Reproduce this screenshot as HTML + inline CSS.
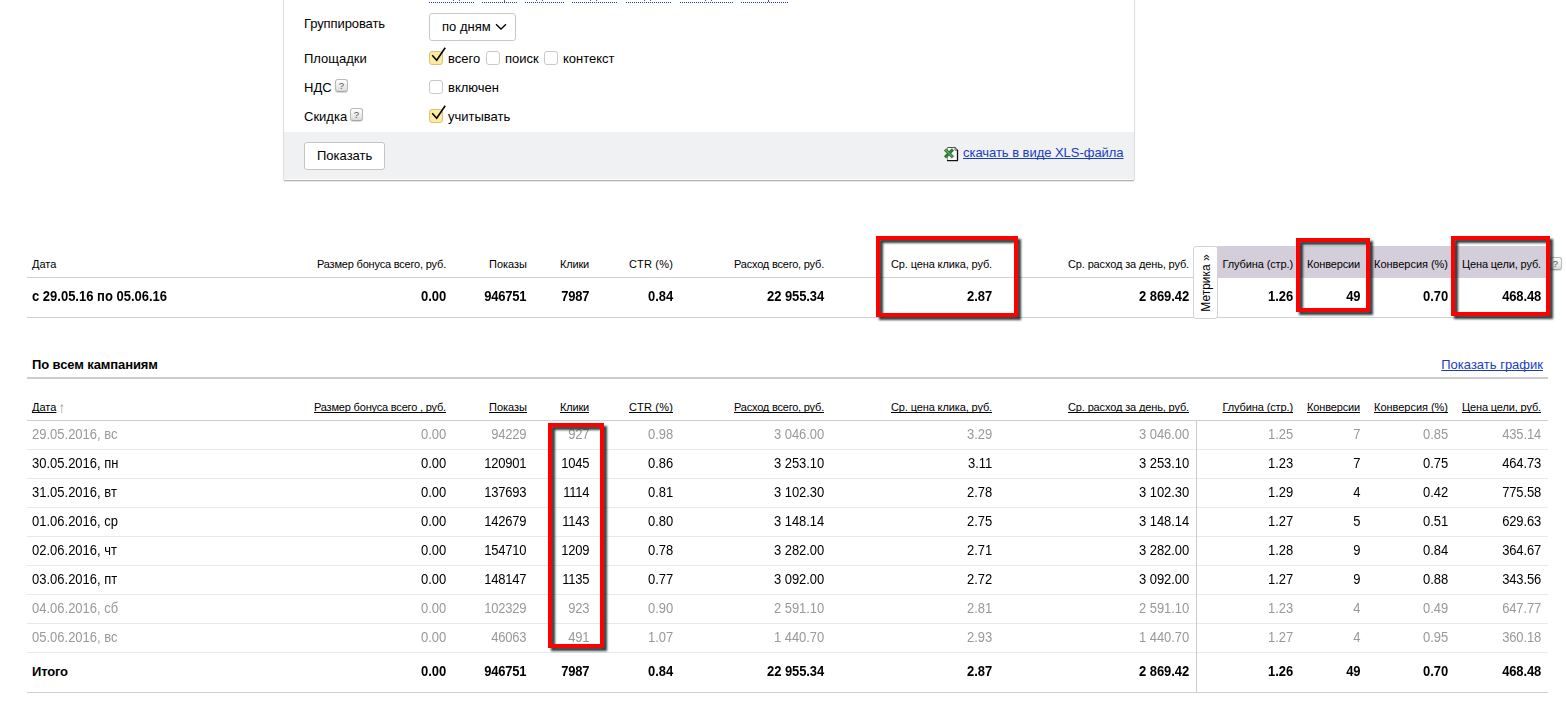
<!DOCTYPE html>
<html lang="ru"><head><meta charset="utf-8"><title>Статистика</title>
<style>
html,body{margin:0;padding:0}
body{width:1566px;height:707px;position:relative;overflow:hidden;background:#fff;font-family:"Liberation Sans",Arial,sans-serif;font-size:13px;color:#000}
.abs{position:absolute}
.c{position:absolute;white-space:nowrap;line-height:16px;text-decoration-skip-ink:none}
.t{transform:scaleY(1.1);transform-origin:0 3.2px}
.n{}
.h{font-size:11px;line-height:13px}
.hu{font-size:11px;line-height:13px;text-decoration:underline}
.b{font-weight:bold}
.g{color:#999}
.lnk{color:#1a3dc1;text-decoration:underline}
.hl{position:absolute;height:1px;left:27px;width:1521px;background:#d2d2d2}
.rl{background:#e9e8ef}
.cb{position:absolute;width:12px;height:12px;border:1px solid #c9c9c9;border-radius:3px;background:#fff}
.cb.on{background:#ffeba0;border-color:#d9c379}
.q{position:absolute;width:11px;height:11px;border:1px solid #b9b9b9;border-bottom-color:#a5a5a5;border-radius:3px;background:linear-gradient(#fff,#dcdcdc);font-size:9.5px;line-height:12px;text-align:center;color:#555;box-shadow:0 1px 1px rgba(0,0,0,.15)}
.red{position:absolute;border:4px solid #fe0000;box-sizing:border-box;filter:drop-shadow(3px 3px 1.2px rgba(15,30,30,.85))}
.dot{position:absolute;top:2px;height:1px;background:repeating-linear-gradient(90deg,#1a3dc1 0 1px,transparent 1px 2px)}
.tk{position:absolute;top:0;width:1px;height:2px;background:#6a4fc8}
</style></head><body>

<div class="abs" style="left:283px;top:-20px;width:850px;height:199px;border:1px solid #dfdfdf;border-bottom-color:#b2b2b2;border-radius:0 0 3px 3px;background:#fff;box-shadow:0 1px 1px rgba(0,0,0,.1)"></div>
<div class="abs" style="left:284px;top:132px;width:850px;height:47px;background:#f0f1f3;border-radius:0 0 2px 2px"></div>

<div class="dot" style="left:429px;width:45px"></div>
<div class="tk" style="left:453px;height:1px"></div>
<div class="tk" style="left:459px;height:1px"></div>
<div class="dot" style="left:482px;width:35px"></div>
<div class="tk" style="left:504px;height:2px"></div>
<div class="dot" style="left:525px;width:39px"></div>
<div class="tk" style="left:536px;height:1px"></div>
<div class="tk" style="left:542px;height:1px"></div>
<div class="dot" style="left:572px;width:46px"></div>
<div class="tk" style="left:590px;height:1px"></div>
<div class="tk" style="left:596px;height:1px"></div>
<div class="dot" style="left:626px;width:46px"></div>
<div class="tk" style="left:644px;height:1px"></div>
<div class="tk" style="left:650px;height:1px"></div>
<div class="dot" style="left:680px;width:53px"></div>
<div class="tk" style="left:705px;height:1px"></div>
<div class="tk" style="left:711px;height:1px"></div>
<div class="dot" style="left:741px;width:47px"></div>
<div class="tk" style="left:768px;height:2px"></div>

<div class="c" style="left:304px;top:16px;letter-spacing:-0.1px">Группировать</div>
<div class="c" style="left:304px;top:51px">Площадки</div>
<div class="c" style="left:304px;top:80px">НДС</div>
<div class="c" style="left:304px;top:109px">Скидка</div>
<div class="abs" style="left:429px;top:13px;width:85px;height:26px;border:1px solid #c9c9c9;border-radius:3px;background:#fff"></div>
<div class="c" style="left:442px;top:19px">по дням</div>
<svg class="abs" style="left:495px;top:23px" width="12" height="8" viewBox="0 0 12 8"><path d="M1 1.2 L6 6 L11 1.2" fill="none" stroke="#000" stroke-width="1.3"/></svg>
<div class="cb on" style="left:429px;top:51px"></div>
<svg class="abs" style="left:430px;top:46px" width="18" height="18" viewBox="0 0 18 18"><path d="M2.2 9.3 L6.7 14.3 L15.2 1.8" fill="none" stroke="#000" stroke-width="1.6"/></svg>
<div class="c" style="left:448px;top:51px">всего</div>
<div class="cb" style="left:486px;top:51px"></div>
<div class="c" style="left:505px;top:51px">поиск</div>
<div class="cb" style="left:544px;top:51px"></div>
<div class="c" style="left:563px;top:51px">контекст</div>
<div class="cb" style="left:429px;top:80px"></div>
<div class="c" style="left:448px;top:80px">включен</div>
<div class="cb on" style="left:429px;top:109px"></div>
<svg class="abs" style="left:430px;top:104px" width="18" height="18" viewBox="0 0 18 18"><path d="M2.2 9.3 L6.7 14.3 L15.2 1.8" fill="none" stroke="#000" stroke-width="1.6"/></svg>
<div class="c" style="left:448px;top:109px">учитывать</div>
<div class="q" style="left:335px;top:79px">?</div>
<div class="q" style="left:350px;top:108px">?</div>
<div class="abs" style="left:304px;top:142px;width:79px;height:26px;border:1px solid #c4c4c4;border-radius:3px;background:#fff"></div>
<div class="c" style="left:317px;top:148px">Показать</div>
<div class="c lnk" style="left:963px;top:145px;letter-spacing:-0.04px">скачать в виде XLS-файла</div>
<svg class="abs" style="left:943px;top:146px" width="17" height="17" viewBox="0 0 17 17">
<path d="M4.5 1.5h8l2 2.2v11.8h-10z" fill="#fff"/>
<path d="M4.5 15V1.5" stroke="#9a9a9a" stroke-width="1" fill="none"/>
<path d="M4.5 1.5h8" stroke="#555" stroke-width="1" fill="none"/>
<path d="M12 1.5v2.7h2.6" stroke="#666" stroke-width="1" fill="none"/>
<path d="M12.2 1.6l2.4 2.5" stroke="#222" stroke-width="1" fill="none"/>
<path d="M14.5 4v10.6M4 14.6h11" stroke="#111" stroke-width="1.3" fill="none"/>
<path d="M2 3.3l8 8" stroke="#2f7d32" stroke-width="3.2" fill="none"/>
<path d="M10 3.3l-8 8" stroke="#2f7d32" stroke-width="3.2" fill="none"/>
<path d="M2.2 3.5l7.6 7.6" stroke="#8fc48f" stroke-width="0.9" fill="none"/>
</svg>

<div class="abs" style="left:1217px;top:246px;width:331px;height:31px;background:#d4cedb"></div>
<div class="hl" style="top:277px"></div>
<div class="hl" style="top:317px"></div>
<div class="c h" style="left:32px;top:258px">Дата</div>
<div class="c h" style="left:317px;top:258px;letter-spacing:-0.189px">Размер бонуса всего, руб.</div>
<div class="c h" style="left:489px;top:258px;letter-spacing:-0.005px">Показы</div>
<div class="c h" style="left:560px;top:258px;letter-spacing:-0.188px">Клики</div>
<div class="c h" style="left:629px;top:258px;letter-spacing:0.174px">CTR (%)</div>
<div class="c h" style="left:734px;top:258px;letter-spacing:-0.202px">Расход всего, руб.</div>
<div class="c h" style="left:891px;top:258px;letter-spacing:-0.124px">Ср. цена клика, руб.</div>
<div class="c h" style="left:1068px;top:258px;letter-spacing:-0.137px">Ср. расход за день, руб.</div>
<div class="c h" style="left:1222.5px;top:258px;letter-spacing:-0.116px">Глубина (стр.)</div>
<div class="c h" style="left:1307px;top:258px;letter-spacing:-0.151px">Конверсии</div>
<div class="c h" style="left:1374px;top:258px;letter-spacing:-0.025px">Конверсия (%)</div>
<div class="c h" style="left:1462px;top:258px;letter-spacing:-0.140px">Цена цели, руб.</div>
<div class="c b t" style="left:32px;top:288px">с 29.05.16 по 05.06.16</div>
<div class="c b t n" style="right:1119.92px;top:288px;letter-spacing:-0.076px">0.00</div>
<div class="c b t n" style="right:1039.77px;top:288px;letter-spacing:-0.231px">946751</div>
<div class="c b t n" style="right:976.77px;top:288px;letter-spacing:-0.231px">7987</div>
<div class="c b t n" style="right:892.92px;top:288px;letter-spacing:-0.076px">0.84</div>
<div class="c b t n" style="right:741.91px;top:288px;letter-spacing:-0.093px">22 955.34</div>
<div class="c b t n" style="right:573.92px;top:288px;letter-spacing:-0.076px">2.87</div>
<div class="c b t n" style="right:376.92px;top:288px;letter-spacing:-0.076px">2 869.42</div>
<div class="c b t n" style="right:272.92px;top:288px;letter-spacing:-0.076px">1.26</div>
<div class="c b t n" style="right:205.77px;top:288px;letter-spacing:-0.231px">49</div>
<div class="c b t n" style="right:117.92px;top:288px;letter-spacing:-0.076px">0.70</div>
<div class="c b t n" style="right:24.87px;top:288px;letter-spacing:-0.127px">468.48</div>
<div class="abs" style="left:1193px;top:246px;width:23px;height:71px;border:1px solid #d3d3d3;border-radius:3px;background:#fff"></div>
<div class="abs" style="left:1205.5px;top:283px;width:0;height:0"><div style="position:absolute;left:-40px;top:-8px;width:80px;height:16px;line-height:16px;text-align:center;white-space:nowrap;transform:rotate(-90deg) scaleY(1.1);font-size:12px">Метрика »</div></div>
<div class="q" style="left:1549px;top:257px">?</div>
<div class="c b" style="letter-spacing:-0.1px;left:32px;top:357px">По всем кампаниям</div>
<div class="c lnk" style="right:23px;top:357px">Показать график</div>
<div class="hl" style="top:377px;height:2px;background:#cdcdcd"></div>
<div class="c hu" style="left:32px;top:401px">Дата</div><div class="c h" style="left:58.6px;top:402.6px;color:#8c8c8c;transform:scale(1.1,1.4);transform-origin:0 10px">↑</div>
<div class="c hu" style="left:314px;top:401px;letter-spacing:-0.184px">Размер бонуса всего , руб.</div>
<div class="c hu" style="left:489px;top:401px;letter-spacing:-0.005px">Показы</div>
<div class="c hu" style="left:560px;top:401px;letter-spacing:-0.188px">Клики</div>
<div class="c hu" style="left:629px;top:401px;letter-spacing:0.174px">CTR (%)</div>
<div class="c hu" style="left:734px;top:401px;letter-spacing:-0.202px">Расход всего, руб.</div>
<div class="c hu" style="left:891px;top:401px;letter-spacing:-0.124px">Ср. цена клика, руб.</div>
<div class="c hu" style="left:1068px;top:401px;letter-spacing:-0.137px">Ср. расход за день, руб.</div>
<div class="c hu" style="left:1222.5px;top:401px;letter-spacing:-0.116px">Глубина (стр.)</div>
<div class="c hu" style="left:1307px;top:401px;letter-spacing:-0.151px">Конверсии</div>
<div class="c hu" style="left:1374px;top:401px;letter-spacing:-0.025px">Конверсия (%)</div>
<div class="c hu" style="left:1462px;top:401px;letter-spacing:-0.140px">Цена цели, руб.</div>
<div class="hl" style="top:420px;background:#cdcdcd"></div>
<div class="c g t" style="left:32px;top:426px">29.05.2016, вс</div>
<div class="c g t n" style="right:1119.92px;top:426px;letter-spacing:-0.076px">0.00</div>
<div class="c g t n" style="right:1039.77px;top:426px;letter-spacing:-0.231px">94229</div>
<div class="c g t n" style="right:976.77px;top:426px;letter-spacing:-0.231px">927</div>
<div class="c g t n" style="right:892.92px;top:426px;letter-spacing:-0.076px">0.98</div>
<div class="c g t n" style="right:741.92px;top:426px;letter-spacing:-0.076px">3 046.00</div>
<div class="c g t n" style="right:573.92px;top:426px;letter-spacing:-0.076px">3.29</div>
<div class="c g t n" style="right:376.92px;top:426px;letter-spacing:-0.076px">3 046.00</div>
<div class="c g t n" style="right:272.92px;top:426px;letter-spacing:-0.076px">1.25</div>
<div class="c g t n" style="right:205.77px;top:426px;letter-spacing:-0.231px">7</div>
<div class="c g t n" style="right:117.92px;top:426px;letter-spacing:-0.076px">0.85</div>
<div class="c g t n" style="right:24.87px;top:426px;letter-spacing:-0.127px">435.14</div>
<div class="hl rl" style="top:449px"></div>
<div class="c t" style="left:32px;top:455px">30.05.2016, пн</div>
<div class="c t n" style="right:1119.92px;top:455px;letter-spacing:-0.076px">0.00</div>
<div class="c t n" style="right:1039.77px;top:455px;letter-spacing:-0.231px">120901</div>
<div class="c t n" style="right:976.77px;top:455px;letter-spacing:-0.231px">1045</div>
<div class="c t n" style="right:892.92px;top:455px;letter-spacing:-0.076px">0.86</div>
<div class="c t n" style="right:741.92px;top:455px;letter-spacing:-0.076px">3 253.10</div>
<div class="c t n" style="right:573.92px;top:455px;letter-spacing:-0.076px">3.11</div>
<div class="c t n" style="right:376.92px;top:455px;letter-spacing:-0.076px">3 253.10</div>
<div class="c t n" style="right:272.92px;top:455px;letter-spacing:-0.076px">1.23</div>
<div class="c t n" style="right:205.77px;top:455px;letter-spacing:-0.231px">7</div>
<div class="c t n" style="right:117.92px;top:455px;letter-spacing:-0.076px">0.75</div>
<div class="c t n" style="right:24.87px;top:455px;letter-spacing:-0.127px">464.73</div>
<div class="hl rl" style="top:478px"></div>
<div class="c t" style="left:32px;top:484px">31.05.2016, вт</div>
<div class="c t n" style="right:1119.92px;top:484px;letter-spacing:-0.076px">0.00</div>
<div class="c t n" style="right:1039.77px;top:484px;letter-spacing:-0.231px">137693</div>
<div class="c t n" style="right:976.77px;top:484px;letter-spacing:-0.231px">1114</div>
<div class="c t n" style="right:892.92px;top:484px;letter-spacing:-0.076px">0.81</div>
<div class="c t n" style="right:741.92px;top:484px;letter-spacing:-0.076px">3 102.30</div>
<div class="c t n" style="right:573.92px;top:484px;letter-spacing:-0.076px">2.78</div>
<div class="c t n" style="right:376.92px;top:484px;letter-spacing:-0.076px">3 102.30</div>
<div class="c t n" style="right:272.92px;top:484px;letter-spacing:-0.076px">1.29</div>
<div class="c t n" style="right:205.77px;top:484px;letter-spacing:-0.231px">4</div>
<div class="c t n" style="right:117.92px;top:484px;letter-spacing:-0.076px">0.42</div>
<div class="c t n" style="right:24.87px;top:484px;letter-spacing:-0.127px">775.58</div>
<div class="hl rl" style="top:507px"></div>
<div class="c t" style="left:32px;top:513px">01.06.2016, ср</div>
<div class="c t n" style="right:1119.92px;top:513px;letter-spacing:-0.076px">0.00</div>
<div class="c t n" style="right:1039.77px;top:513px;letter-spacing:-0.231px">142679</div>
<div class="c t n" style="right:976.77px;top:513px;letter-spacing:-0.231px">1143</div>
<div class="c t n" style="right:892.92px;top:513px;letter-spacing:-0.076px">0.80</div>
<div class="c t n" style="right:741.92px;top:513px;letter-spacing:-0.076px">3 148.14</div>
<div class="c t n" style="right:573.92px;top:513px;letter-spacing:-0.076px">2.75</div>
<div class="c t n" style="right:376.92px;top:513px;letter-spacing:-0.076px">3 148.14</div>
<div class="c t n" style="right:272.92px;top:513px;letter-spacing:-0.076px">1.27</div>
<div class="c t n" style="right:205.77px;top:513px;letter-spacing:-0.231px">5</div>
<div class="c t n" style="right:117.92px;top:513px;letter-spacing:-0.076px">0.51</div>
<div class="c t n" style="right:24.87px;top:513px;letter-spacing:-0.127px">629.63</div>
<div class="hl rl" style="top:536px"></div>
<div class="c t" style="left:32px;top:542px">02.06.2016, чт</div>
<div class="c t n" style="right:1119.92px;top:542px;letter-spacing:-0.076px">0.00</div>
<div class="c t n" style="right:1039.77px;top:542px;letter-spacing:-0.231px">154710</div>
<div class="c t n" style="right:976.77px;top:542px;letter-spacing:-0.231px">1209</div>
<div class="c t n" style="right:892.92px;top:542px;letter-spacing:-0.076px">0.78</div>
<div class="c t n" style="right:741.92px;top:542px;letter-spacing:-0.076px">3 282.00</div>
<div class="c t n" style="right:573.92px;top:542px;letter-spacing:-0.076px">2.71</div>
<div class="c t n" style="right:376.92px;top:542px;letter-spacing:-0.076px">3 282.00</div>
<div class="c t n" style="right:272.92px;top:542px;letter-spacing:-0.076px">1.28</div>
<div class="c t n" style="right:205.77px;top:542px;letter-spacing:-0.231px">9</div>
<div class="c t n" style="right:117.92px;top:542px;letter-spacing:-0.076px">0.84</div>
<div class="c t n" style="right:24.87px;top:542px;letter-spacing:-0.127px">364.67</div>
<div class="hl rl" style="top:565px"></div>
<div class="c t" style="left:32px;top:571px">03.06.2016, пт</div>
<div class="c t n" style="right:1119.92px;top:571px;letter-spacing:-0.076px">0.00</div>
<div class="c t n" style="right:1039.77px;top:571px;letter-spacing:-0.231px">148147</div>
<div class="c t n" style="right:976.77px;top:571px;letter-spacing:-0.231px">1135</div>
<div class="c t n" style="right:892.92px;top:571px;letter-spacing:-0.076px">0.77</div>
<div class="c t n" style="right:741.92px;top:571px;letter-spacing:-0.076px">3 092.00</div>
<div class="c t n" style="right:573.92px;top:571px;letter-spacing:-0.076px">2.72</div>
<div class="c t n" style="right:376.92px;top:571px;letter-spacing:-0.076px">3 092.00</div>
<div class="c t n" style="right:272.92px;top:571px;letter-spacing:-0.076px">1.27</div>
<div class="c t n" style="right:205.77px;top:571px;letter-spacing:-0.231px">9</div>
<div class="c t n" style="right:117.92px;top:571px;letter-spacing:-0.076px">0.88</div>
<div class="c t n" style="right:24.87px;top:571px;letter-spacing:-0.127px">343.56</div>
<div class="hl rl" style="top:594px"></div>
<div class="c g t" style="left:32px;top:600px">04.06.2016, сб</div>
<div class="c g t n" style="right:1119.92px;top:600px;letter-spacing:-0.076px">0.00</div>
<div class="c g t n" style="right:1039.77px;top:600px;letter-spacing:-0.231px">102329</div>
<div class="c g t n" style="right:976.77px;top:600px;letter-spacing:-0.231px">923</div>
<div class="c g t n" style="right:892.92px;top:600px;letter-spacing:-0.076px">0.90</div>
<div class="c g t n" style="right:741.92px;top:600px;letter-spacing:-0.076px">2 591.10</div>
<div class="c g t n" style="right:573.92px;top:600px;letter-spacing:-0.076px">2.81</div>
<div class="c g t n" style="right:376.92px;top:600px;letter-spacing:-0.076px">2 591.10</div>
<div class="c g t n" style="right:272.92px;top:600px;letter-spacing:-0.076px">1.23</div>
<div class="c g t n" style="right:205.77px;top:600px;letter-spacing:-0.231px">4</div>
<div class="c g t n" style="right:117.92px;top:600px;letter-spacing:-0.076px">0.49</div>
<div class="c g t n" style="right:24.87px;top:600px;letter-spacing:-0.127px">647.77</div>
<div class="hl rl" style="top:623px"></div>
<div class="c g t" style="left:32px;top:629px">05.06.2016, вс</div>
<div class="c g t n" style="right:1119.92px;top:629px;letter-spacing:-0.076px">0.00</div>
<div class="c g t n" style="right:1039.77px;top:629px;letter-spacing:-0.231px">46063</div>
<div class="c g t n" style="right:976.77px;top:629px;letter-spacing:-0.231px">491</div>
<div class="c g t n" style="right:892.92px;top:629px;letter-spacing:-0.076px">1.07</div>
<div class="c g t n" style="right:741.92px;top:629px;letter-spacing:-0.076px">1 440.70</div>
<div class="c g t n" style="right:573.92px;top:629px;letter-spacing:-0.076px">2.93</div>
<div class="c g t n" style="right:376.92px;top:629px;letter-spacing:-0.076px">1 440.70</div>
<div class="c g t n" style="right:272.92px;top:629px;letter-spacing:-0.076px">1.27</div>
<div class="c g t n" style="right:205.77px;top:629px;letter-spacing:-0.231px">4</div>
<div class="c g t n" style="right:117.92px;top:629px;letter-spacing:-0.076px">0.95</div>
<div class="c g t n" style="right:24.87px;top:629px;letter-spacing:-0.127px">360.18</div>
<div class="hl rl" style="top:652px"></div>
<div class="c b" style="letter-spacing:-0.2px;left:32px;top:664px">Итого</div>
<div class="c b t n" style="right:1119.92px;top:663px;letter-spacing:-0.076px">0.00</div>
<div class="c b t n" style="right:1039.77px;top:663px;letter-spacing:-0.231px">946751</div>
<div class="c b t n" style="right:976.77px;top:663px;letter-spacing:-0.231px">7987</div>
<div class="c b t n" style="right:892.92px;top:663px;letter-spacing:-0.076px">0.84</div>
<div class="c b t n" style="right:741.91px;top:663px;letter-spacing:-0.093px">22 955.34</div>
<div class="c b t n" style="right:573.92px;top:663px;letter-spacing:-0.076px">2.87</div>
<div class="c b t n" style="right:376.92px;top:663px;letter-spacing:-0.076px">2 869.42</div>
<div class="c b t n" style="right:272.92px;top:663px;letter-spacing:-0.076px">1.26</div>
<div class="c b t n" style="right:205.77px;top:663px;letter-spacing:-0.231px">49</div>
<div class="c b t n" style="right:117.92px;top:663px;letter-spacing:-0.076px">0.70</div>
<div class="c b t n" style="right:24.87px;top:663px;letter-spacing:-0.127px">468.48</div>
<div class="hl" style="top:692px;background:#cfcfcf"></div>
<div class="abs" style="left:1196px;top:420px;width:1px;height:272px;background:#cbcbcb"></div>
<div class="red" style="left:876px;top:236px;width:142px;height:81px"></div>
<div class="red" style="left:1296px;top:238px;width:74px;height:74px"></div>
<div class="red" style="left:1451px;top:236px;width:99px;height:80px"></div>
<div class="red" style="left:548px;top:423px;width:56px;height:225px"></div>
</body></html>
